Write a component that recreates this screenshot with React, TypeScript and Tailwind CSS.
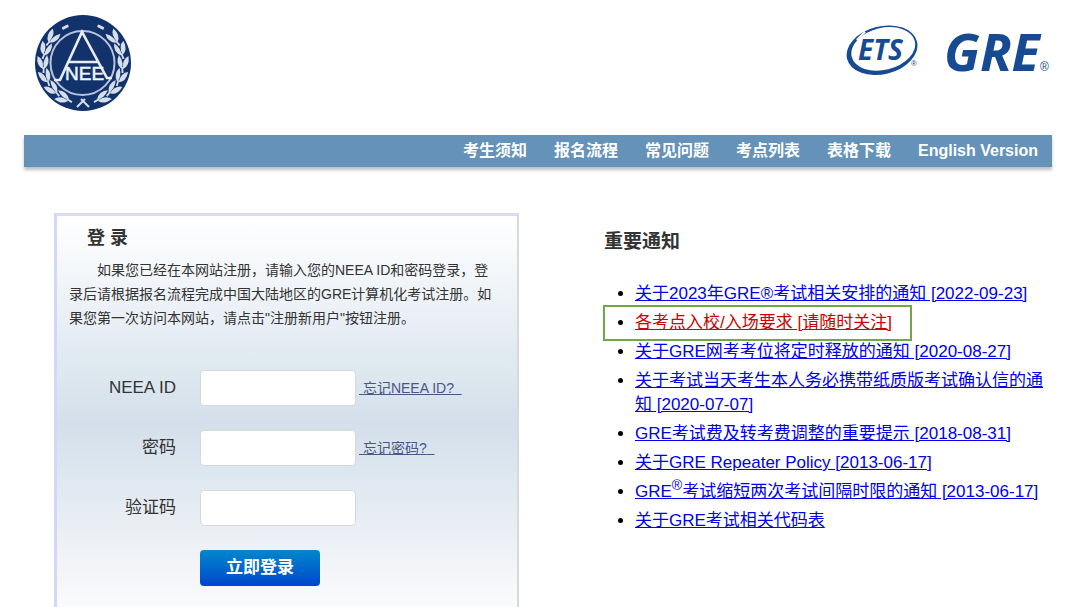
import { useState } from 'react';

interface NavItem {
  label: string;
  href: string;
}

interface Notice {
  title: string;
  sup?: string;
  rest?: string;
  highlighted?: boolean;
}

const navItems: NavItem[] = [
  { label: '考生须知', href: '#guide' },
  { label: '报名流程', href: '#process' },
  { label: '常见问题', href: '#faq' },
  { label: '考点列表', href: '#centers' },
  { label: '表格下载', href: '#forms' },
  { label: 'English Version', href: '#en' },
];

const notices: Notice[] = [
  { title: '关于2023年GRE®考试相关安排的通知 [2022-09-23]' },
  { title: '各考点入校/入场要求 [请随时关注]', highlighted: true },
  { title: '关于GRE网考考位将定时释放的通知 [2020-08-27]' },
  { title: '关于考试当天考生本人务必携带纸质版考试确认信的通知 [2020-07-07]' },
  { title: 'GRE考试费及转考费调整的重要提示 [2018-08-31]' },
  { title: '关于GRE Repeater Policy [2013-06-17]' },
  { title: 'GRE', sup: '®', rest: '考试缩短两次考试间隔时限的通知 [2013-06-17]' },
  { title: '关于GRE考试相关代码表' },
];

const leafAngles = [50, 70, 90, 110, 130, 150];

function Wreath() {
  return (
    <g fill="#d5deeb">
      <rect x="45" y="6.500" width="7" height="3" rx="1" transform="rotate(-27 48 48)" />
      {leafAngles.map((angle) => (
        <g key={angle} transform={`rotate(${-angle} 48 48)`}>
          <path d="M42 8 Q45 1 55 2.500 Q52 9 42 8Z" />
          <path d="M42 9.500 Q48 6.500 56 12 Q48 16 42 9.500Z" />
          <path d="M38 7.500 L44 8 L44 9.500 L38 9.500Z" />
        </g>
      ))}
    </g>
  );
}

function NeeaLogo() {
  return (
    <svg viewBox="0 0 96 96" className="size-24" role="img" aria-label="NEEA">
      <circle cx="48" cy="48" r="48" fill="#12326b" />
      <Wreath />
      <g transform="translate(96 0) scale(-1 1)">
        <Wreath />
      </g>
      <path d="M42 92 L50 84 M54 92 L46 84" fill="none" stroke="#d5deeb" strokeWidth="2" />
      <circle cx="47.500" cy="48" r="32" fill="#12326b" stroke="#b7c3d9" strokeWidth="2" />
      <path
        d="M19 65 H25 L47 17 L72 63 H77 M33 47 H63"
        fill="none"
        stroke="#e8edf5"
        strokeWidth="2.6"
      />
      <text
        x="30"
        y="65"
        fontSize="19"
        fill="#f1f4f9"
        stroke="#f1f4f9"
        strokeWidth="0.500"
        fontFamily="Liberation Sans, sans-serif"
      >
        NEE
      </text>
    </svg>
  );
}

function EtsLogo() {
  return (
    <svg viewBox="0 0 76 54" className="h-[54px] w-[76px]" role="img" aria-label="ETS">
      <g transform="rotate(-14 37 27)">
        <path
          fillRule="evenodd"
          fill="#164a92"
          d="M0 27 A36 24 0 1 0 72 27 A36 24 0 1 0 0 27Z M5 26 A32.500 21 0 1 0 70 26 A32.500 21 0 1 0 5 26Z"
        />
        <path d="M14 11 L24 5" stroke="#fff" strokeWidth="2" />
      </g>
      <text
        x="12"
        y="37"
        fontSize="28"
        fontWeight="700"
        fontStyle="italic"
        fill="#164a92"
        fontFamily="Open Sans, sans-serif"
      >
        ETS
      </text>
      <text x="65" y="43" fontSize="8" fill="#164a92" fontFamily="Liberation Sans, sans-serif">
        ®
      </text>
    </svg>
  );
}

function GreLogo() {
  return (
    <svg viewBox="0 0 108 78" className="h-[78px] w-[108px]" role="img" aria-label="GRE">
      <text
        x="0"
        y="60"
        fontSize="52"
        fontWeight="700"
        fontStyle="italic"
        fill="#164a92"
        fontFamily="Open Sans, sans-serif"
      >
        GRE
      </text>
      <text x="96" y="60" fontSize="12" fill="#164a92" fontFamily="Liberation Sans, sans-serif">
        ®
      </text>
    </svg>
  );
}

interface FieldProps {
  id: string;
  label: string;
  type?: string;
  value: string;
  onChange: (value: string) => void;
  help?: string;
}

function Field({ id, label, type = 'text', value, onChange, help }: FieldProps) {
  return (
    <div className="flex items-center">
      <label htmlFor={id} className="w-[107px] shrink-0 text-right text-[17px] leading-6">
        {label}
      </label>
      <input
        id={id}
        type={type}
        value={value}
        onChange={(e) => onChange(e.target.value)}
        className="ml-6 h-9 w-[156px] rounded border border-[#d3d9e0] bg-white px-2 text-base"
      />
      {help && (
        <a href={`#forgot-${id}`} className="ml-[3px] text-sm whitespace-pre text-[#4a5686] underline">
          {'\u00a0'}
          {help}
          {'\u00a0\u00a0'}
        </a>
      )}
    </div>
  );
}

function LoginPanel() {
  const [neeaId, setNeeaId] = useState('');
  const [password, setPassword] = useState('');
  const [captcha, setCaptcha] = useState('');

  return (
    <section className="min-w-0 border-t-3 border-r-2 border-l-3 border-t-[#dcdaf5] border-r-[#d5d9e2] border-l-[#d6d6f7] bg-[linear-gradient(to_bottom,#ffffff_0%,#e6edf4_30%,#dde8ef_40%,#d4dfeb_53%,#dee8f0_67%,#edf0f5_83%,#fafbfd_100%)] pt-2 pr-5 pb-[21px] pl-3 text-[#333]">
      <h2 className="pl-[18px] text-lg leading-7 font-bold">登 录</h2>
      <p className="mt-1.5 indent-[2em] text-sm leading-6">
        如果您已经在本网站注册，请输入您的NEEA ID和密码登录，登录后请根据报名流程完成中国大陆地区的GRE计算机化考试注册。如果您第一次访问本网站，请点击"注册新用户"按钮注册。
      </p>
      <form className="mt-10 flex flex-col gap-6" onSubmit={(e) => e.preventDefault()}>
        <Field id="neea-id" label="NEEA ID" value={neeaId} onChange={setNeeaId} help="忘记NEEA ID?" />
        <Field
          id="password"
          label="密码"
          type="password"
          value={password}
          onChange={setPassword}
          help="忘记密码?"
        />
        <Field id="captcha" label="验证码" value={captcha} onChange={setCaptcha} />
        <button
          type="submit"
          className="ml-[131px] h-9 w-[120px] rounded bg-linear-to-b from-[#0787cb] to-[#0044cc] text-[17px] font-bold text-white"
        >
          立即登录
        </button>
      </form>
    </section>
  );
}

function NoticeList() {
  return (
    <section className="min-w-0 pt-[17px]">
      <h2 className="text-[19px] leading-6 font-bold text-[#333]">重要通知</h2>
      <ul className="mt-7 flex list-disc flex-col items-start gap-[5px] pl-[31px] text-[17px] leading-6 text-black">
        {notices.map((notice) => (
          <li key={notice.title} className="relative">
            <a
              href="#notice"
              className={notice.highlighted ? 'text-[#cc0000] underline' : 'text-[#0000ee] underline'}
            >
              {notice.title}
              {notice.sup && <sup className="text-sm leading-none">{notice.sup}</sup>}
              {notice.rest}
            </a>
            {notice.highlighted && (
              <span className="pointer-events-none absolute -inset-y-1.5 -right-5 -left-8 border-2 border-[#70a84b]" />
            )}
          </li>
        ))}
      </ul>
    </section>
  );
}

export default function App() {
  return (
    <div className="bg-white pr-7 pl-6 font-['Liberation_Sans','Noto_Sans_CJK_SC',sans-serif]">
      <header className="flex items-end justify-between pt-[11px] pl-[11px]">
        <NeeaLogo />
        <div className="flex items-center gap-[22px] pb-[22px]">
          <EtsLogo />
          <GreLogo />
        </div>
      </header>

      <nav className="mt-6 flex h-8 items-center justify-end gap-[27px] bg-[#6492b8] pr-3.5 text-base font-bold text-white shadow-[0_3px_3px_rgba(0,0,0,0.25)]">
        {navItems.map((item) => (
          <a key={item.label} href={item.href} className="whitespace-nowrap">
            {item.label}
          </a>
        ))}
      </nav>

      <main className="mt-[46px] grid grid-cols-[465fr_448fr] gap-[85px] pl-[30px]">
        <LoginPanel />
        <NoticeList />
      </main>
    </div>
  );
}
